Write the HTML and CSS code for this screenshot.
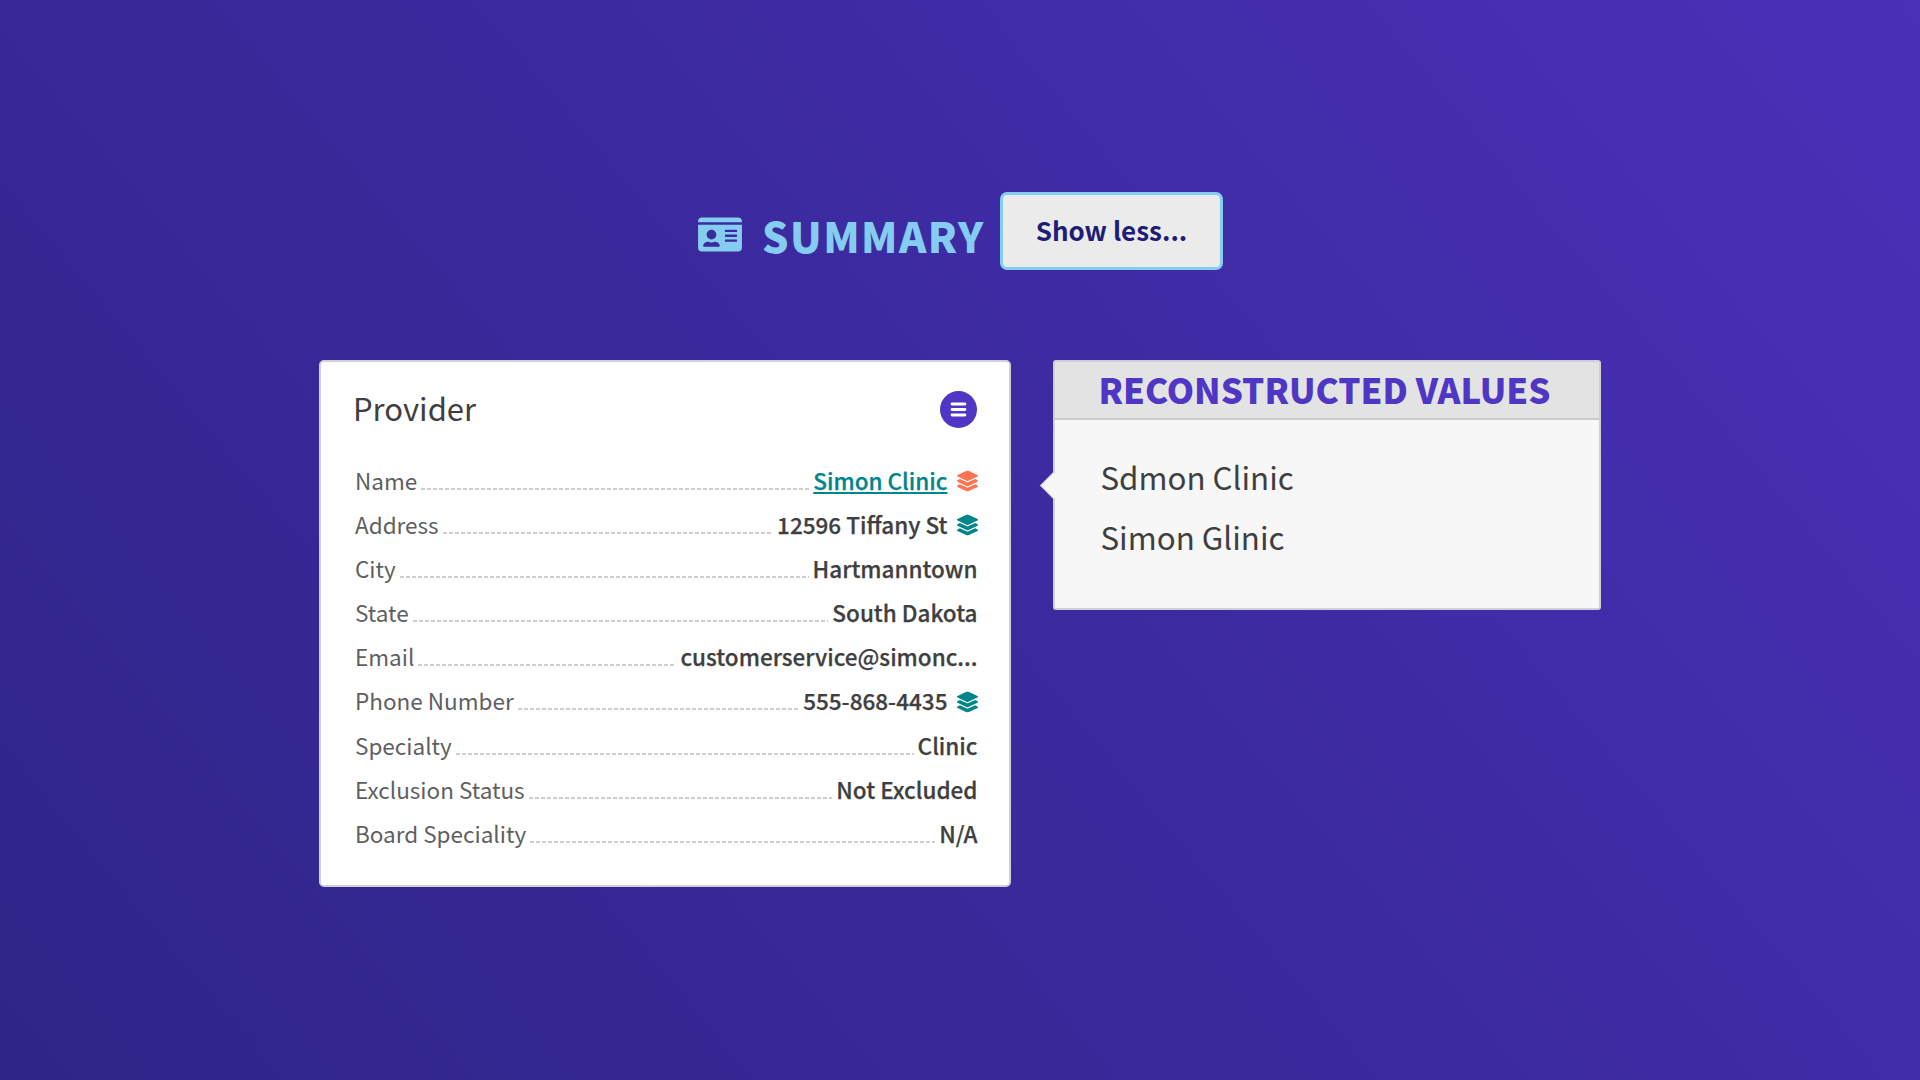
FILE: index.html
```html
<!DOCTYPE html>
<html lang="en">
<head>
    <meta charset="UTF-8">
    <title>Summary</title>
    <link rel="stylesheet" href="styles.css">
</head>
<body>

    <div class="page">
        <div class="summary-head">
            <svg class="summary-icon" viewBox="0 0 576 512"><path d="M528 32H48C21.5 32 0 53.5 0 80v16h576V80c0-26.5-21.5-48-48-48zM0 432c0 26.5 21.5 48 48 48h480c26.5 0 48-21.5 48-48V128H0v304zm352-232c0-4.4 3.6-8 8-8h144c4.4 0 8 3.6 8 8v16c0 4.4-3.6 8-8 8H360c-4.4 0-8-3.6-8-8v-16zm0 64c0-4.4 3.6-8 8-8h144c4.4 0 8 3.6 8 8v16c0 4.4-3.6 8-8 8H360c-4.4 0-8-3.6-8-8v-16zm0 64c0-4.4 3.6-8 8-8h144c4.4 0 8 3.6 8 8v16c0 4.4-3.6 8-8 8H360c-4.4 0-8-3.6-8-8v-16zM176 192c35.3 0 64 28.7 64 64s-28.7 64-64 64-64-28.7-64-64 28.7-64 64-64zM67.1 396.2C75.5 370.5 99.6 352 128 352h8.2c12.3 5.1 25.7 8 39.8 8s27.6-2.9 39.8-8h8.2c28.4 0 52.5 18.5 60.9 44.2 3.2 9.9-5.2 19.8-15.6 19.8H82.7c-10.4 0-18.8-10-15.6-19.8z"/></svg>
            <h1 class="summary-title">SUMMARY</h1>
            <button class="show-less">Show less...</button>
        </div>

        <div class="cards">
            <div class="provider">
                <div class="provider-head">
                    <h2>Provider</h2>
                    <span class="menu-btn">
                        <svg viewBox="0 0 16 16"><path d="M2.6 3.4h10.8M2.6 8h10.8M2.6 12.6h10.8"/></svg>
                    </span>
                </div>
                <div class="row">
                    <span class="label">Name</span><span class="dots"></span>
                    <a class="value link" href="#">Simon Clinic</a>
                    <svg class="layers orange" viewBox="0 0 512 512"><use href="#layer-group"/></svg>
                </div>
                <div class="row">
                    <span class="label">Address</span><span class="dots"></span>
                    <span class="value">12596 Tiffany St</span>
                    <svg class="layers teal" viewBox="0 0 512 512"><use href="#layer-group"/></svg>
                </div>
                <div class="row">
                    <span class="label">City</span><span class="dots"></span>
                    <span class="value">Hartmanntown</span>
                </div>
                <div class="row">
                    <span class="label">State</span><span class="dots"></span>
                    <span class="value">South Dakota</span>
                </div>
                <div class="row">
                    <span class="label">Email</span><span class="dots"></span>
                    <span class="value">customerservice@simonc...</span>
                </div>
                <div class="row">
                    <span class="label">Phone Number</span><span class="dots"></span>
                    <span class="value">555-868-4435</span>
                    <svg class="layers teal" viewBox="0 0 512 512"><use href="#layer-group"/></svg>
                </div>
                <div class="row">
                    <span class="label">Specialty</span><span class="dots"></span>
                    <span class="value">Clinic</span>
                </div>
                <div class="row">
                    <span class="label">Exclusion Status</span><span class="dots"></span>
                    <span class="value">Not Excluded</span>
                </div>
                <div class="row">
                    <span class="label">Board Speciality</span><span class="dots"></span>
                    <span class="value">N/A</span>
                </div>
            </div>

            <div class="popover">
                <div class="popover-title">RECONSTRUCTED VALUES</div>
                <div class="popover-body">
                    <p>Sdmon Clinic</p>
                    <p>Simon Glinic</p>
                </div>
            </div>
        </div>
    </div>

    <svg class="sprites" width="0" height="0">
        <symbol id="layer-group" viewBox="0 0 512 512">
            <path d="M12.41 148.02l232.94 105.67c6.8 3.09 14.49 3.09 21.29 0l232.94-105.67c16.55-7.51 16.55-32.52 0-40.03L266.65 2.31a25.607 25.607 0 0 0-21.29 0L12.41 107.98c-16.55 7.51-16.55 32.53 0 40.04zm487.18 88.28l-58.09-26.33-161.64 73.27c-7.56 3.43-15.59 5.17-23.86 5.17s-16.29-1.74-23.86-5.17L70.51 209.97l-58.1 26.33c-16.55 7.5-16.55 32.5 0 40l232.94 105.59c6.8 3.08 14.49 3.08 21.29 0L499.59 276.3c16.55-7.5 16.55-32.5 0-40zm0 127.8l-57.87-26.23-161.86 73.37c-7.56 3.43-15.59 5.17-23.86 5.17s-16.29-1.74-23.86-5.17L70.29 337.87 12.41 364.1c-16.55 7.5-16.55 32.5 0 40l232.94 105.59c6.8 3.08 14.49 3.08 21.29 0L499.59 404.1c16.55-7.5 16.55-32.5 0-40z"/>
        </symbol>
    </svg>

</body>
</html>
```

FILE: styles.css
```css
* {
    box-sizing: border-box;
}
html, body {
    height: 100%;
}
body {
    margin: 0;
    font-family: "Noto Sans CJK SC", "Noto Sans", sans-serif;
    background: linear-gradient(50deg, #2f2588 0%, #3b2a9e 50%, #4a30b8 100%);
    overflow: hidden;
}
.page {
    width: 1282px;
    margin: 0 auto;
    padding-top: 192px;
}
.sprites {
    position: absolute;
}

/* header */
.summary-head {
    display: flex;
    align-items: center;
    height: 78px;
    padding-left: 379px;
}
.summary-icon {
    width: 44px;
    height: 39px;
    margin-top: 7px;
    fill: #85cdf0;
}
.summary-title {
    width: 238px;
    margin: 0 0 0 20px;
    padding-top: 7px;
    font-size: 41.5px;
    line-height: 78px;
    font-weight: 900;
    letter-spacing: 1.5px;
    white-space: nowrap;
    color: #85cdf0;
}
.show-less {
    width: 223px;
    height: 78px;
    padding-bottom: 4px;
    border: 3px solid #85cdf0;
    border-radius: 7px;
    background-color: #ebebeb;
    font-family: inherit;
    font-size: 26px;
    font-weight: 700;
    color: #1f1d75;
}

/* cards */
.cards {
    display: flex;
    align-items: flex-start;
    margin-top: 90px;
}
.provider {
    width: 693px;
    height: 527px;
    padding: 28px 32px 0 32px;
    background-color: #fff;
    border: 2px solid #cfcfd6;
    border-radius: 5px;
}
.provider-head {
    display: flex;
    justify-content: space-between;
    align-items: center;
    height: 38px;
    margin-bottom: 29.5px;
}
.provider-head h2 {
    margin: 0 0 2px;
    font-size: 31px;
    line-height: 36px;
    font-weight: 400;
    color: #3f3f3f;
}
.menu-btn {
    display: flex;
    align-items: center;
    justify-content: center;
    width: 37px;
    height: 37px;
    border-radius: 50%;
    background-color: #4f36c4;
}
.menu-btn svg {
    width: 19px;
    height: 19px;
    fill: none;
    stroke: #fff;
    stroke-width: 2.5;
    stroke-linecap: round;
}
.row {
    display: flex;
    align-items: baseline;
    height: 44.2px;
    font-size: 22.5px;
    line-height: 44px;
    margin-left: 2px;
}
.label {
    color: #5f5f5f;
}
.dots {
    flex: 1;
    height: 2px;
    margin: 0 4px;
    background: repeating-linear-gradient(90deg, #cfcfcf 0 4px, transparent 4px 6px);
}
.value {
    font-weight: 500;
    -webkit-text-stroke: 0.25px currentColor;
    color: #3f3f3f;
}
.link {
    color: #00858a;
    text-decoration: underline;
}
.layers {
    width: 21px;
    height: 22px;
    margin: 2px -1px 0 10px;
    align-self: center;
}
.orange {
    fill: #ff7350;
}
.teal {
    fill: #00858a;
}

/* popover */
.popover {
    position: relative;
    width: 548px;
    height: 250px;
    margin-left: 42px;
    background-color: #f7f7f7;
    border: 2px solid #cfcfd6;
    border-radius: 3px;
}
.popover::before {
    content: "";
    position: absolute;
    left: -11px;
    top: 114px;
    width: 18px;
    height: 18px;
    background-color: #f7f7f7;
    border-left: 1px solid #d5d5da;
    border-bottom: 1px solid #d5d5da;
    transform: rotate(45deg);
}
.popover-title {
    height: 58px;
    padding-left: 43px;
    background-color: #e3e3e3;
    border-bottom: 2px solid #cbcbcb;
    font-size: 34.8px;
    line-height: 54px;
    font-weight: 900;
    white-space: nowrap;
    color: #4f36c4;
}
.popover-body {
    padding: 32px 0 0 45px;
}
.popover-body p {
    margin: 0 0 10px;
    font-size: 31.3px;
    line-height: 50px;
    color: #3f3f3f;
}
```
